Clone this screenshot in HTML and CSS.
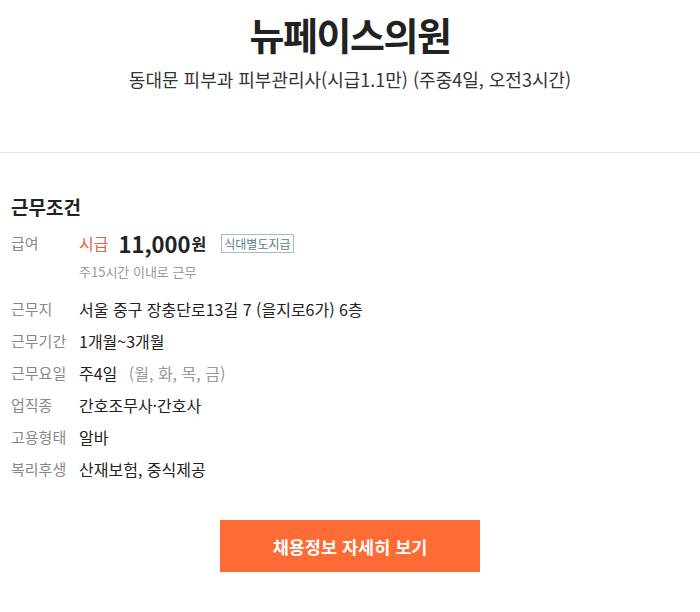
FILE: index.html
```html
<!DOCTYPE html>
<html lang="ko">
<head>
<meta charset="utf-8">
<link rel="stylesheet" href="styles.css">
</head>
<body>
<header class="head">
  <h1 class="title">뉴페이스의원</h1>
  <p class="subtitle">동대문 피부과 피부관리사(시급1.1만) (주중4일, 오전3시간)</p>
</header>
<section class="cond">
  <h2 class="cond-title">근무조건</h2>
  <div class="rows">
    <div class="row row-pay">
      <div class="label">급여</div>
      <div class="value">
        <div class="pay-line">
          <span class="pay-type">시급</span>
          <span class="pay-amount">11,000</span><span class="pay-unit">원</span>
          <span class="pay-tag">식대별도지급</span>
        </div>
        <div class="pay-note">주15시간 이내로 근무</div>
      </div>
    </div>
    <div class="row">
      <div class="label">근무지</div>
      <div class="value">서울 중구 장충단로13길 7 (을지로6가) 6층</div>
    </div>
    <div class="row">
      <div class="label">근무기간</div>
      <div class="value">1개월~3개월</div>
    </div>
    <div class="row">
      <div class="label">근무요일</div>
      <div class="value">주4일 <span class="muted">(월, 화, 목, 금)</span></div>
    </div>
    <div class="row">
      <div class="label">업직종</div>
      <div class="value">간호조무사·간호사</div>
    </div>
    <div class="row">
      <div class="label">고용형태</div>
      <div class="value">알바</div>
    </div>
    <div class="row">
      <div class="label">복리후생</div>
      <div class="value">산재보험, 중식제공</div>
    </div>
  </div>
  <div class="btn-wrap">
    <a class="btn" href="#">채용정보 자세히 보기</a>
  </div>
</section>
</body>
</html>
```
FILE: styles.css
```css
* { box-sizing: border-box; }
html, body { margin: 0; padding: 0; background: #fff; }
body {
  font-family: "Noto Sans CJK KR", "Noto Sans", sans-serif;
  color: #222;
}
.head {
  text-align: center;
  padding-top: 10px;
  height: 153px;
  border-bottom: 1px solid #e8e8e8;
}
.title {
  margin: 0;
  font-size: 38px;
  line-height: 48px;
  font-weight: 700;
  color: #222;
  letter-spacing: -1.5px;
}
.subtitle {
  margin: 8px 0 0;
  font-size: 18px;
  line-height: 26px;
  color: #333;
  letter-spacing: 0;
}
.cond { padding: 40px 11px 0; }
.cond-title {
  margin: 0;
  font-size: 19px;
  line-height: 28px;
  font-weight: 700;
  color: #222;
}
.rows {
  margin-top: 10px;
  display: flex;
  flex-direction: column;
}
.row {
  display: flex;
  font-size: 16px;
  line-height: 32px;
}
.label {
  width: 68px;
  flex: none;
  color: #888;
  font-size: 15px;
}
.value { color: #222; }
.muted { color: #999; margin-left: 7px; }
.row-pay .label { line-height: 24px; }
.row-pay .value { padding-bottom: 11px; }
.pay-line {
  display: flex;
  align-items: center;
  height: 24px;
}
.pay-type { color: #e0663f; font-size: 16px; }
.pay-amount {
  margin-left: 10px;
  font-size: 22px;
  font-weight: 700;
  color: #222;
}
.pay-unit { font-size: 16px; font-weight: 700; color: #222; margin-left: 1px; }
.pay-tag {
  margin-left: 15px;
  border: 1px solid #a9bcc6;
  color: #5c7d8c;
  font-size: 12px;
  line-height: 17px;
  padding: 0 2px;
}
.pay-note {
  margin-top: 7px;
  font-size: 13px;
  line-height: 20px;
  color: #999;
}
.btn-wrap {
  display: flex;
  justify-content: center;
  margin-top: 35px;
}
.btn {
  display: flex;
  align-items: center;
  justify-content: center;
  width: 260px;
  height: 52px;
  background: #ff6b35;
  color: #fff;
  font-size: 17.5px;
  font-weight: 700;
  text-decoration: none;
}
```
